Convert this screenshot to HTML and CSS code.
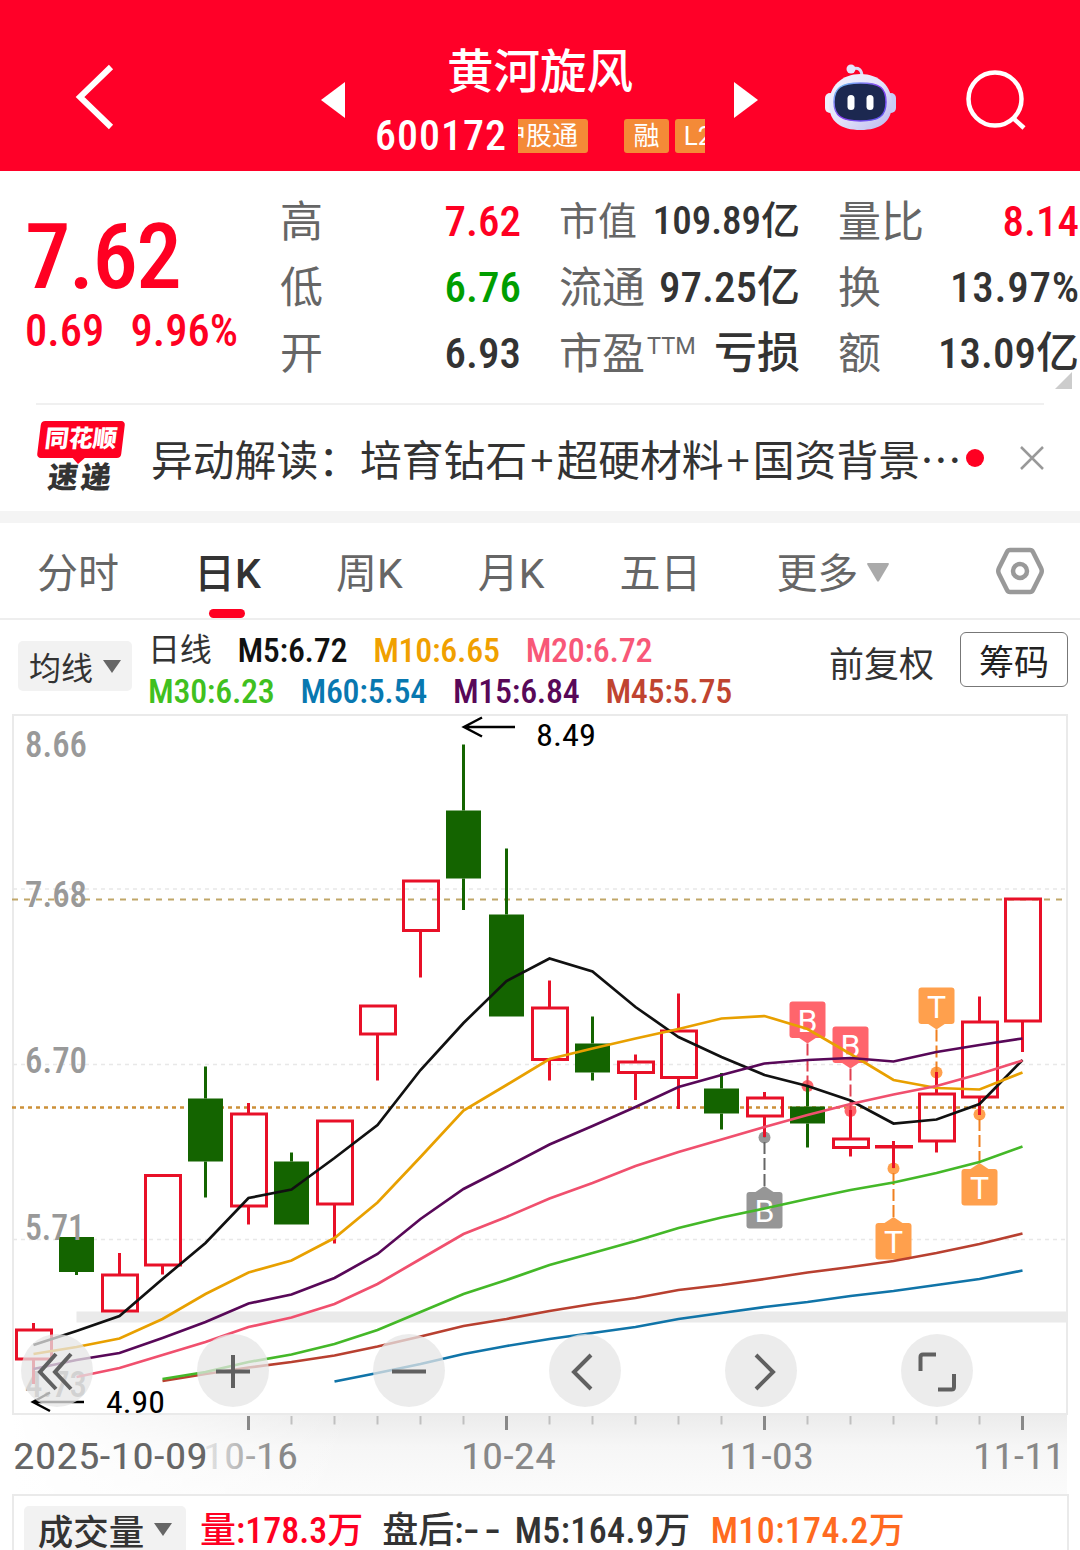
FILE: index.html
```html
<!DOCTYPE html>
<html lang="zh-CN">
<head>
  <meta charset="UTF-8" />
  <meta name="viewport" content="width=device-width, initial-scale=1" />
  <title>黄河旋风 600172</title>
  <link rel="stylesheet" href="styles.css">
</head>
<body>
  <header class="header">
    <svg class="back" width="40" height="68" viewBox="0 0 40 68"><path d="M37 4 L6 34 L37 64" /></svg>
    <svg class="prev" width="24" height="36" viewBox="0 0 24 36"><path d="M24 0 V36 L0 18 Z" /></svg>
    <div class="stock">
      <h1 class="stock-name">黄河旋风</h1>
      <div class="stock-info">
        <span class="stock-code">600172</span>
        <div class="tags">
          <span class="tag tag-hk">沪股通</span>
          <span class="tag tag-rong">融</span>
          <span class="tag tag-l2">L2</span>
        </div>
      </div>
    </div>
    <svg class="next" width="24" height="36" viewBox="0 0 24 36"><path d="M0 0 V36 L24 18 Z" /></svg>
    <svg class="robot" width="74" height="70" viewBox="0 0 74 70">
      <defs>
        <linearGradient id="shell" x1="0" y1="0" x2="1" y2="1">
          <stop offset="0" stop-color="#f4f4ff" />
          <stop offset="0.5" stop-color="#e4e4fa" />
          <stop offset="1" stop-color="#b9b6ee" />
        </linearGradient>
        <linearGradient id="rim" x1="0" y1="0" x2="1" y2="1">
          <stop offset="0" stop-color="#6fd6f5" />
          <stop offset="0.5" stop-color="#8a3cf0" />
          <stop offset="1" stop-color="#5a5cf0" />
        </linearGradient>
      </defs>
      <path d="M28 5 Q38 2 38 13" fill="none" stroke="#dcdcf8" stroke-width="3" />
      <circle cx="27" cy="5" r="4.500" fill="#e6e4fc" />
      <rect x="1" y="29" width="10" height="20" rx="5" fill="#f0effd" />
      <rect x="62" y="29" width="10" height="20" rx="5" fill="#c9cbf6" />
      <path d="M36.500 10 C55 10 68 22 68 40 C68 58 56 66 36.500 66 C17 66 5 58 5 40 C5 22 18 10 36.500 10 Z" fill="url(#shell)" />
      <path d="M36.500 19 C56 19 62 24 62 38 C62 52 55 57 36.500 57 C18 57 10 52 10 38 C10 24 17 19 36.500 19 Z" fill="#1c2850" stroke="url(#rim)" stroke-width="1.500" />
      <rect x="23.500" y="31" width="7" height="15" rx="3.500" fill="#fff" />
      <rect x="42.500" y="31" width="7" height="15" rx="3.500" fill="#fff" />
    </svg>
    <svg class="search" width="62" height="62" viewBox="0 0 62 62"><circle cx="30" cy="30" r="26.500" /><path d="M48 49 L59 59" /></svg>
  </header>

  <section class="quote">
    <div class="price">
      <div class="price-now">7.62</div>
      <div class="price-change"><span>0.69</span><span>9.96%</span></div>
    </div>
    <dl class="col">
      <div><dt>高</dt><dd class="up">7.62</dd></div>
      <div><dt>低</dt><dd class="down">6.76</dd></div>
      <div><dt>开</dt><dd>6.93</dd></div>
    </dl>
    <dl class="col">
      <div class="small"><dt>市值</dt><dd>109.89亿</dd></div>
      <div><dt>流通</dt><dd>97.25亿</dd></div>
      <div><dt>市盈<sup>TTM</sup></dt><dd>亏损</dd></div>
    </dl>
    <dl class="col">
      <div><dt>量比</dt><dd class="up">8.14</dd></div>
      <div><dt>换</dt><dd class="rate">13.97%</dd></div>
      <div><dt>额</dt><dd>13.09亿</dd></div>
    </dl>
    <i class="corner"></i>
  </section>

  <section class="news">
    <div class="news-logo">
      <span class="logo-top">同花顺</span>
      <span class="logo-bottom">速递</span>
    </div>
    <p class="news-text">异动解读：培育钻石<b>+</b>超硬材料<b>+</b>国资背景…</p>
    <i class="dot"></i>
    <svg class="close" width="24" height="24" viewBox="0 0 24 24"><path d="M1 1 L23 23 M23 1 L1 23" /></svg>
  </section>

  <nav class="tabs">
    <a class="tab">分时</a>
    <a class="tab active">日K</a>
    <a class="tab">周K</a>
    <a class="tab">月K</a>
    <a class="tab">五日</a>
    <a class="tab">更多<svg width="22" height="19" viewBox="0 0 22 19"><path d="M1 0 H21 Q22.500 0 21.500 2 L12 18 Q11 19.500 10 18 L.500 2 Q-.500 0 1 0 Z" /></svg></a>
    <svg class="setting" width="50" height="48" viewBox="0 0 50 48"><path d="M15 3 H35 Q37 3 38 5 L46 21 Q47.500 24 46 27 L38 43 Q37 45 35 45 H15 Q13 45 12 43 L4 27 Q2.500 24 4 21 L12 5 Q13 3 15 3 Z" /><circle cx="25" cy="24" r="7" /></svg>
  </nav>

  <section class="legend">
    <button type="button" class="picker">均线<i class="arrow"></i></button>
    <div class="ma-list">
      <div class="ma-row">
        <span class="ma-title">日线</span>
        <span class="m5">M5:6.72</span>
        <span class="m10">M10:6.65</span>
        <span class="m20">M20:6.72</span>
      </div>
      <div class="ma-row">
        <span class="m30">M30:6.23</span>
        <span class="m60">M60:5.54</span>
        <span class="m15">M15:6.84</span>
        <span class="m45">M45:5.75</span>
      </div>
    </div>
    <span class="adjust">前复权</span>
    <button type="button" class="chips">筹码</button>
  </section>

  <section class="chart">
    <svg id="kline" width="1080" height="780" viewBox="0 714 1080 780"></svg>
    <div class="controls">
      <button type="button"><svg viewBox="0 0 72 72"><path d="M35 19 L19 37 L35 54 M50 19 L34 37 L50 54" /></svg></button>
      <button type="button"><svg viewBox="0 0 72 72"><path d="M36 20 V53 M19 36.500 H53" /></svg></button>
      <button type="button"><svg viewBox="0 0 72 72"><path d="M19 36.500 H53" /></svg></button>
      <button type="button"><svg viewBox="0 0 72 72"><path d="M42 20 L25 37 L42 54" /></svg></button>
      <button type="button"><svg viewBox="0 0 72 72"><path d="M31 20 L48 37 L31 54" /></svg></button>
      <button type="button"><svg viewBox="0 0 72 72"><path d="M19.500 36 V22 Q19.500 19.500 22 19.500 H35 M53 39 V52 Q53 54.500 50.500 54.500 H37" /></svg></button>
    </div>
  </section>

  <section class="volume">
    <button type="button" class="picker vol-picker">成交量<i class="arrow"></i></button>
    <span class="vol up">量:178.3万</span>
    <span class="vol after">盘后:<span class="dashes">--</span></span>
    <span class="vol vol5">M5:164.9万</span>
    <span class="vol vol10">M10:174.2万</span>
  </section>

  <script src="chart.js"></script>
</body>
</html>
```

FILE: styles.css
```css
* {
  box-sizing: border-box;
}
body {
  margin: 0;
  width: 1080px;
  height: 1550px;
  overflow: hidden;
  background: #fff;
  color: #333;
  font-family: Roboto, "Noto Sans CJK SC", sans-serif;
  font-stretch: 87%;
}
button {
  border: none;
  padding: 0;
  font-family: inherit;
}

/* header */
.header {
  display: flex;
  align-items: flex-start;
  height: 171px;
  background: #ff0028;
}
.header svg {
  flex: none;
  fill: #fff;
}
.header .back {
  margin: 63px 0 0 74px;
  fill: none;
  stroke: #fff;
  stroke-width: 6;
}
.prev {
  margin: 82px 0 0 207px;
}
.stock {
  width: 330px;
  margin: 42px 29px 0 30px;
}
.stock-name {
  margin: 0;
  font-size: 46.5px;
  font-weight: 500;
  line-height: 60px;
  text-align: center;
  color: #fff;
}
.stock-info {
  display: flex;
  align-items: center;
  height: 68px;
}
.stock-code {
  width: 143px;
  font-size: 42px;
  font-weight: 500;
  line-height: 68px;
  letter-spacing: 1px;
  color: #fff;
}
.tags {
  display: flex;
  width: 187px;
  overflow: hidden;
}
.tag {
  flex: none;
  height: 34px;
  border-radius: 3px;
  background: #f48a37;
  color: #fff;
  font-size: 26px;
  line-height: 35px;
  text-align: center;
}
.tag-hk {
  width: 88px;
  margin-left: -18px;
  padding-right: 10px;
}
.tag-rong {
  width: 45px;
  margin-left: 36px;
}
.tag-l2 {
  width: 50px;
  margin-left: 6px;
  padding-right: 4px;
  font-stretch: 100%;
}
.next {
  margin-top: 82px;
}
.robot {
  margin: 64px 0 0 66px;
}
.header .search {
  margin: 69px 0 0 67px;
  fill: none;
  stroke: #fff;
  stroke-width: 4.5;
}

/* quote */
.quote {
  position: relative;
  display: flex;
  gap: 39px;
  height: 232px;
  padding-top: 17px;
}
.price {
  width: 242px;
  padding-left: 25px;
  color: #ff0022;
}
.price-now {
  margin-top: 19px;
  font-size: 91px;
  font-weight: 500;
  line-height: 100px;
  letter-spacing: -1.7px;
}
.price-change {
  display: flex;
  justify-content: space-between;
  width: 213px;
  font-size: 44.5px;
  font-weight: 500;
  line-height: 49px;
}
.col {
  width: 240px;
  margin: 0;
}
.col > div {
  display: flex;
  justify-content: space-between;
  height: 66px;
  white-space: nowrap;
  line-height: 68px;
  font-size: 43px;
}
.col > .small {
  font-size: 39px;
}
dt {
  margin-left: -1px;
  color: #666;
}
dt sup {
  margin-left: 2px;
  font-size: 23.5px;
  font-stretch: 100%;
  line-height: 0;
}
dd {
  margin: 0;
  font-weight: 500;
  line-height: 66px;
}
.rate {
  letter-spacing: 0.8px;
  margin-right: -1px;
}
.up {
  color: #ff0022;
}
.down {
  color: #009e00;
}
.corner {
  position: absolute;
  right: 8px;
  top: 201px;
  border-left: 17px solid transparent;
  border-bottom: 17px solid #ccc;
}

/* news */
.news {
  display: flex;
  align-items: center;
  height: 108px;
  margin: 0 36px;
  border-top: 2px solid #f0f0f0;
}
.news-logo {
  width: 84px;
  margin-left: 3px;
  text-align: center;
  font-weight: 900;
}
.logo-top,
.logo-bottom {
  display: block;
  transform: skewX(-7deg);
}
.logo-top {
  position: relative;
  height: 37px;
  border-radius: 4px;
  background: #ff0022;
  color: #fff;
  font-size: 24px;
  line-height: 36px;
}
.logo-top::after {
  content: "";
  position: absolute;
  left: 35px;
  top: 36px;
  border: 7px solid transparent;
  border-top-color: #ff0022;
  border-bottom: none;
}
.logo-bottom {
  margin-bottom: -2px;
  font-size: 30px;
  line-height: 40px;
  letter-spacing: 3px;
}
.news-text {
  width: 811px;
  margin: 0 0 0 28px;
  font-family: "Noto Sans CJK SC", sans-serif;
  font-size: 41.8px;
  white-space: nowrap;
}
.news-text b {
  padding: 0 3px;
  font-weight: 400;
}
.dot {
  width: 18px;
  height: 18px;
  margin-left: 4px;
  border-radius: 50%;
  background: #ff0022;
}
.close {
  margin-left: 36px;
  stroke: #999;
  stroke-width: 2.5;
}

/* tabs */
.tabs {
  display: flex;
  align-items: center;
  gap: 75px;
  height: 109px;
  padding-left: 37px;
  border-top: 12px solid #f4f4f4;
  border-bottom: 2px solid #eee;
  font-size: 41px;
  font-stretch: 100%;
  color: #666;
}
.tab {
  position: relative;
  height: 95px;
  line-height: 102px;
  white-space: nowrap;
}
.tab.active {
  color: #333;
  font-weight: 500;
}
.tab.active::after {
  content: "";
  position: absolute;
  left: 15px;
  bottom: 0;
  width: 36px;
  height: 9px;
  border-radius: 5px;
  background: #ff0022;
}
.tab svg {
  margin-left: 9px;
  vertical-align: 6px;
  fill: #aaa;
}
.setting {
  margin: 0 35px 0 auto;
  fill: none;
  stroke: #999;
  stroke-width: 4.5;
}

/* ma legend */
.legend {
  display: flex;
  height: 94px;
  padding: 10px 12px 0 18px;
}
.picker {
  display: flex;
  align-items: center;
  justify-content: center;
  gap: 10px;
  width: 114px;
  height: 50px;
  margin-top: 11px;
  border-radius: 5px;
  background: #f2f2f2;
  color: #333;
  font-size: 32px;
}
.arrow {
  border: 9px solid transparent;
  border-top: 13px solid #666;
  border-bottom: none;
}
.ma-list {
  width: 681px;
  margin-left: 16px;
  font-size: 34px;
  font-weight: 500;
}
.ma-row {
  display: flex;
  gap: 26px;
  height: 41px;
  line-height: 40px;
  letter-spacing: -0.3px;
  white-space: nowrap;
}
.ma-title {
  font-size: 32px;
  font-weight: 400;
}
.m5 { color: #111; }
.m10 { color: #f0a000; }
.m20 { color: #f85878; }
.m30 { color: #40c020; }
.m60 { color: #0878b0; }
.m15 { color: #580858; }
.m45 { color: #c04430; }
.adjust {
  width: 131px;
  font-size: 35px;
  line-height: 72px;
}
.chips {
  width: 108px;
  height: 55px;
  margin-top: 2px;
  border: 1.5px solid #777;
  border-radius: 6px;
  background: #fff;
  color: #222;
  font-size: 35px;
}

/* chart */
.chart {
  position: relative;
  height: 780px;
}
#kline {
  display: block;
}
.controls {
  position: absolute;
  left: 21px;
  top: 620px;
  display: flex;
  gap: 104px;
}
.controls button {
  width: 72px;
  height: 73px;
  border-radius: 50%;
  background: rgba(230, 230, 230, 0.75);
}
.controls svg {
  display: block;
  fill: none;
  stroke: #606060;
  stroke-width: 4;
}
.scale,
.date {
  font-size: 36px;
}
.scale {
  fill: #999;
  font-weight: 500;
}
.date {
  fill: #888;
}
.date.first {
  fill: #666;
}
.date.covered {
  fill: url(#cover);
}
.peak {
  font-size: 32px;
}
.mark {
  font-size: 32px;
  font-stretch: 100%;
  fill: #fff;
  text-anchor: middle;
}

/* volume */
.volume {
  display: flex;
  height: 80px;
  margin: 0 11px 0 12px;
  padding-left: 10px;
  border: 2px solid #eaeaea;
}
.vol-picker {
  width: 162px;
  height: 50px;
  margin-top: 10px;
  padding-bottom: 3px;
  font-size: 35.5px;
  font-weight: 500;
}
.vol {
  margin-left: 14px;
  font-size: 36px;
  font-weight: 500;
  line-height: 70px;
  white-space: nowrap;
}
.after {
  margin-left: 19px;
}
.dashes {
  display: inline-block;
  margin-right: 8px;
  letter-spacing: 3px;
  transform: scaleX(1.5);
  transform-origin: left;
}
.vol5 {
  margin-left: 15px;
  letter-spacing: 0.4px;
}
.vol10 {
  margin-left: 20px;
  letter-spacing: 0.4px;
  color: #ff6a20;
}
```

FILE: chart.js
```js
const svg = document.getElementById('kline');
const X0 = 33.5;
const STEP = 43;

// [up?, high, body top, body bottom, low]
const candles = [
  [1, 1323, 1330, 1359, 1384],
  [0, 1237, 1237, 1272, 1275],
  [1, 1253, 1275, 1311, 1311],
  [1, 1175, 1175.5, 1265, 1274.5],
  [0, 1066.5, 1098.5, 1161.5, 1197.5],
  [1, 1103, 1114, 1206, 1224.5],
  [0, 1152.5, 1161.5, 1224.5, 1224.5],
  [1, 1121, 1121, 1204, 1243.5],
  [1, 1006, 1006, 1034, 1080.5],
  [1, 881, 881, 930.5, 977.5],
  [0, 744.5, 810.5, 878.5, 910],
  [0, 848.5, 914.5, 1016.5, 1016.5],
  [1, 980.5, 1008, 1059.5, 1080.5],
  [0, 1016.5, 1043.5, 1072.5, 1080.5],
  [1, 1054.5, 1062, 1072.5, 1100],
  [1, 993.5, 1031, 1077.5, 1109],
  [0, 1073, 1088.5, 1113.5, 1129.5],
  [1, 1092, 1098, 1116, 1137],
  [0, 1085, 1106.5, 1123.5, 1147.5],
  [1, 1110, 1139, 1147.5, 1156.5],
  [1, 1141, 1146.5, 1147, 1168],
  [1, 1072, 1094, 1141, 1152.5],
  [1, 996.5, 1022, 1097, 1115],
  [1, 899, 899, 1021, 1052]
];

// first = index of the first candle the average covers
const averages = [
  { color: '#111', first: 0, y: [1345, 1331, 1316, 1279, 1243, 1198, 1189.5, 1158, 1125, 1070, 1023, 981, 958.5, 971.5, 1007, 1037, 1057, 1075, 1086, 1100.5, 1123.5, 1119.5, 1104, 1060] },
  { color: '#e8a000', first: 0, y: [1354, 1347, 1338.5, 1319, 1294, 1272.5, 1260.5, 1238, 1202.5, 1157, 1110.5, 1085, 1059, 1048.5, 1038.5, 1029, 1018.5, 1016, 1029, 1054, 1080, 1088, 1089.5, 1072.5] },
  { color: '#580858', first: 0, y: [1369, 1360, 1353, 1338, 1322, 1303.5, 1294.5, 1278, 1254, 1219, 1189, 1167, 1144.5, 1126, 1107, 1087, 1075, 1063.5, 1060, 1058, 1061.5, 1052, 1045, 1038.5] },
  { color: '#f0506e', first: 1, y: [1377, 1368, 1355, 1342, 1327, 1317.5, 1304, 1284, 1259, 1234, 1217, 1198.5, 1183, 1166, 1152, 1139.5, 1127, 1115, 1104, 1094.5, 1086, 1074, 1060.5] },
  { color: '#b84030', first: 3, y: [1381, 1374, 1367.5, 1362, 1355.5, 1346.5, 1336.5, 1326, 1319, 1311, 1304, 1298, 1290, 1285, 1279, 1272.5, 1267, 1261, 1253, 1244, 1233.5] },
  { color: '#44b828', first: 3, y: [1379, 1372, 1362, 1354.5, 1344, 1330, 1312, 1294, 1280, 1265, 1253, 1241, 1228, 1217.5, 1208.5, 1199, 1190, 1182.5, 1173, 1162, 1146.5] },
  { color: '#1074a8', first: 7, y: [1381.5, 1373, 1364, 1354, 1346, 1339, 1333, 1327, 1319, 1313, 1307, 1302, 1296, 1291, 1285, 1279, 1270.5] }
];

// box = top of the label, dot = where it points
const marks = [
  { i: 17, text: 'B', color: '#969696', line: '#666', box: 1192, dot: 1137.5 },
  { i: 18, text: 'B', color: '#ff656c', line: '#e04050', box: 1001.5, dot: 1086 },
  { i: 19, text: 'B', color: '#ff656c', line: '#e04050', box: 1026.5, dot: 1111 },
  { i: 20, text: 'T', color: '#ffa04d', line: '#f08020', box: 1223, dot: 1168.5 },
  { i: 21, text: 'T', color: '#ffa04d', line: '#f08020', box: 987.5, dot: 1072.5 },
  { i: 22, text: 'T', color: '#ffa04d', line: '#f08020', box: 1169, dot: 1114.5 }
];

const x = i => X0 + STEP * i;
let out = '';

function line(x1, y1, x2, y2, color, width, dash) {
  out += `<path d="M${x1} ${y1} L${x2} ${y2}" fill="none" stroke="${color}" stroke-width="${width}"${dash ? ` stroke-dasharray="${dash}"` : ''}/>`;
}
function text(tx, ty, cls, value, width) {
  out += `<text x="${tx}" y="${ty}" class="${cls}"${width ? ` textLength="${width}" lengthAdjust="spacingAndGlyphs"` : ''}>${value}</text>`;
}

// date strip
out += `<defs>
  <linearGradient id="strip" x1="0" y1="0" x2="0" y2="1"><stop offset="0" stop-color="#ececec"/><stop offset="0.4" stop-color="#f6f6f6"/><stop offset="1" stop-color="#fbfbfb"/></linearGradient>
  <linearGradient id="fade"><stop offset="0" stop-color="#fff"/><stop offset="1" stop-color="#fff" stop-opacity="0"/></linearGradient>
  <linearGradient id="cover" gradientUnits="userSpaceOnUse" x1="200" y1="0" x2="275" y2="0"><stop offset="0" stop-color="#888" stop-opacity="0.1"/><stop offset="1" stop-color="#888"/></linearGradient>
</defs>
<rect x="13" y="1415" width="1054" height="79" fill="url(#strip)"/>
<rect x="12" y="1415" width="340" height="79" fill="url(#fade)"/>`;

// frame and grid
out += '<rect x="13" y="715" width="1054" height="699" fill="none" stroke="#eaeaea" stroke-width="2"/>';
[889, 1064.5, 1239.5].forEach(y => line(13, y, 1066, y, '#e8e8e8', 1.5, '4 4'));
out += '<rect x="76.5" y="1311.500" width="990.500" height="11" fill="#eaeaea"/>';
line(12, 899.5, 1066, 899.5, '#c0a668', 2, '6 6');
line(12, 1107.5, 1066, 1107.5, '#cc9038', 2.5, '4 4');

text(25, 757, 'scale', '8.66', 62);
text(25, 907, 'scale', '7.68', 62);
text(25, 1073, 'scale', '6.70', 62);
text(25, 1397, 'scale', '4.73', 62);

marks.forEach(m => {
  const cx = x(m.i);
  const above = m.box < m.dot;
  const edge = above ? m.box + 36 : m.box;
  const tip = above ? edge + 6 : edge - 6;
  out += `<circle cx="${cx}" cy="${m.dot}" r="6" fill="${m.color}"/>`;
  line(cx, tip, cx, m.dot, m.line, 2, '12 4');
  out += `<rect x="${cx - 18}" y="${m.box}" width="36" height="36.500" rx="3" fill="${m.color}"/>`;
  out += `<path d="M${cx - 9} ${edge} H${cx + 9} L${cx} ${tip} Z" fill="${m.color}"/>`;
  text(cx, m.box + 30, 'mark', m.text);
});

candles.forEach(([up, high, top, bottom, low], i) => {
  const color = up ? '#e81028' : '#146400';
  line(x(i), high, x(i), top, color, 3);
  line(x(i), bottom, x(i), low, color, 3);
  out += up
    ? `<rect x="${x(i) - 17}" y="${top}" width="35" height="${bottom - top}" fill="none" stroke="${color}" stroke-width="3"/>`
    : `<rect x="${x(i) - 17.5}" y="${top}" width="35" height="${bottom - top}" fill="${color}"/>`;
});
text(25, 1240, 'scale', '5.71', 60);

averages.forEach(a => {
  const points = a.y.map((y, n) => `${x(a.first + n)},${y}`).join(' ');
  out += `<polyline points="${points}" fill="none" stroke="${a.color}" stroke-width="2.700"/>`;
});

// highest and lowest price
out += '<path d="M515 727 H465 M482 717.500 L464 727 L482 736.500 M84 1402 H34 M50 1392.500 L33 1402 L50 1411" fill="none" stroke="#000" stroke-width="2.500"/>';
text(536, 746, 'peak', '8.49', 60);
text(106, 1413, 'peak', '4.90', 59);

// ticks, every sixth one is labelled
for (let i = 5; i < candles.length; i++) {
  const big = (i - 5) % 6 === 0;
  line(x(i), 1416, x(i), big ? 1430 : 1424.5, big ? '#888' : '#c0c0c0', big ? 3 : 2);
}
text(203, 1469, 'date covered', '10-16', 95);
text(13, 1469, 'date first', '2025-10-09', 195);
text(461, 1469, 'date', '10-24', 95);
text(719, 1469, 'date', '11-03', 95);
text(973, 1469, 'date', '11-11', 92);

svg.innerHTML = out;
```
